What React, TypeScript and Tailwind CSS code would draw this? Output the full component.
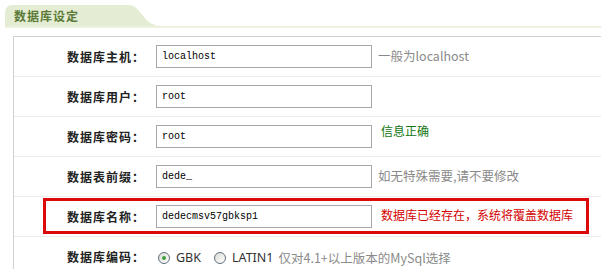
import React from "react";

const cjk = '"Noto Sans CJK SC", "Noto Sans", sans-serif';
const mono = '"Liberation Mono", "Noto Sans CJK SC", monospace';

function Row({
  label,
  children,
  last,
}: {
  label: string;
  children: React.ReactNode;
  last?: boolean;
}) {
  return (
    <div
      className={`flex items-center h-[40px] ${last ? "" : "border-b border-[#ececec]"}`}
    >
      <div className="w-[131px] shrink-0 text-right text-[12px] font-bold text-[#222] leading-none tracking-[1px]">
        {label}
      </div>
      <div className="flex items-center pl-[11px]">{children}</div>
    </div>
  );
}

function Input({ value }: { value: string }) {
  return (
    <div
      className="w-[216px] h-[23px] border border-[#a8a8a8] bg-white flex items-center pl-[5px] text-[10px] text-black"
      style={{ fontFamily: mono }}
    >
      {value}
    </div>
  );
}

function Radio({ checked }: { checked?: boolean }) {
  return (
    <span className="w-[12px] h-[12px] rounded-full border border-[#5e6e80] bg-gradient-to-br from-[#dcdcd6] to-white flex items-center justify-center">
      {checked && <span className="w-[4px] h-[4px] rounded-full bg-[#3da03d]" />}
    </span>
  );
}

export default function App() {
  return (
    <div
      className="w-[601px] h-[269px] bg-white overflow-hidden relative"
      style={{ fontFamily: cjk }}
    >
      {/* Header tab */}
      <div className="pt-[5px]">
        <div className="flex items-end pl-[5px]">
          <div className="h-[21px] w-[118px] bg-[#e4edd4] rounded-tl-[7px] flex items-center pl-[9px] text-[12px] font-bold text-[#5b7a37] tracking-[1px] leading-none">
            数据库设定
          </div>
          <svg width="38" height="21" viewBox="0 0 38 21" className="block">
            <path d="M0 0 L6 0 C 18 0, 20 21, 38 21 L0 21 Z" fill="#e4edd4" />
          </svg>
        </div>
        <div className="h-[2px] ml-[5px] bg-[#edf2df]" />
      </div>

      {/* Panel */}
      <div className="mt-[8px] ml-[13px] border-l border-t border-[#d2d2cc] relative">
        <Row label="数据库主机：">
          <Input value="localhost" />
          <span className="ml-[6px] text-[12.5px] text-[#8a8a8a]">一般为localhost</span>
        </Row>
        <Row label="数据库用户：">
          <Input value="root" />
        </Row>
        <Row label="数据库密码：">
          <Input value="root" />
          <span className="ml-[9px] -mt-[12px] text-[12px] text-[#117711]">信息正确</span>
        </Row>
        <Row label="数据表前缀：">
          <Input value="dede_" />
          <span className="ml-[6px] text-[12.5px] text-[#8a8a8a]">如无特殊需要,请不要修改</span>
        </Row>
        <div className="relative">
          <Row label="数据库名称：">
            <Input value="dedecmsv57gbksp1" />
            <span className="ml-[9px] -mt-[3px] text-[12px] text-[#d40000]">
              数据库已经存在，系统将覆盖数据库
            </span>
          </Row>
          <div className="absolute left-[29px] top-[1px] w-[546px] h-[36px] border-[3px] border-[#dd0a0a] pointer-events-none" />
        </div>
        <Row label="数据库编码：" last>
          <div className="flex items-center text-[12.5px] ml-[2px] mt-[2px]">
            <Radio checked />
            <span className="ml-[6px] text-[#333]" style={{ fontFamily: '"Noto Sans", sans-serif' }}>
              GBK
            </span>
            <span className="ml-[13px]">
              <Radio />
            </span>
            <span className="ml-[6px] text-[#333]" style={{ fontFamily: '"Noto Sans", sans-serif' }}>
              LATIN1
            </span>
            <span className="ml-[5px] text-[#8a8a8a]">仅对4.1+以上版本的MySql选择</span>
          </div>
        </Row>
      </div>
    </div>
  );
}
